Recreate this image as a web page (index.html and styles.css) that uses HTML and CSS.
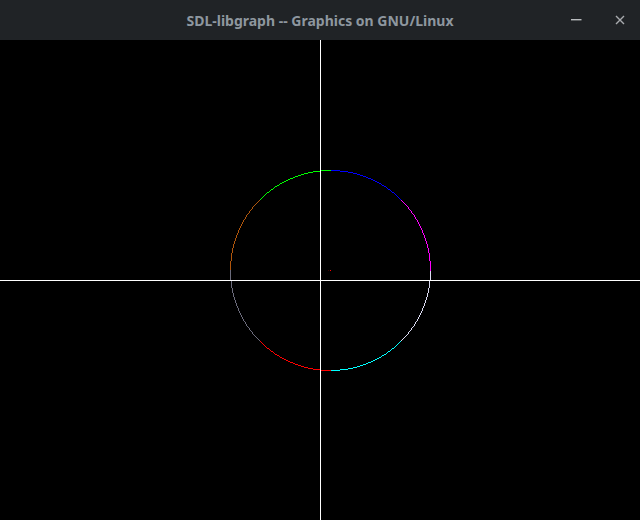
FILE: index.html
```html
<!DOCTYPE html>
<html>
<head>
<meta charset="utf-8">
<title>SDL-libgraph -- Graphics on GNU/Linux</title>
<link rel="stylesheet" href="styles.css">
</head>
<body>
<div class="window">
  <header class="titlebar">
    <div class="title">SDL-libgraph -- Graphics on GNU/Linux</div>
    <div class="controls">
      <svg class="btn" width="20" height="20" viewBox="0 0 20 20"><rect x="11" y="9" width="10.5" height="1.4" fill="#b9bcbf"/></svg>
      <svg class="btn" width="20" height="20" viewBox="0 0 20 20"><path d="M6 6 L14 14 M14 6 L6 14" stroke="#a8abae" stroke-width="1.4" fill="none"/></svg>
    </div>
  </header>
  <canvas id="screen" class="screen" width="640" height="480"></canvas>
</div>
<script src="script.js"></script>
</body>
</html>
```
FILE: styles.css
```css
html, body {
  margin: 0;
  padding: 0;
  background: #000;
}
.window {
  width: 640px;
  height: 520px;
  display: flex;
  flex-direction: column;
}
.titlebar {
  height: 40px;
  background: #202326;
  position: relative;
  display: flex;
  align-items: center;
  justify-content: center;
}
.title {
  font-family: "Noto Sans", "Open Sans", sans-serif;
  font-weight: bold;
  font-size: 14px;
  color: #8e979f;
  letter-spacing: 0;
}
.controls {
  position: absolute;
  right: 10px;
  top: 10px;
  display: flex;
  gap: 30px;
}
.btn {
  display: block;
  overflow: visible;
}
.screen {
  display: block;
  width: 640px;
  height: 480px;
  background: #000;
}
```
FILE: script.js
```js
(function () {
  var c = document.getElementById('screen');
  var g = c.getContext('2d');
  g.fillStyle = '#000';
  g.fillRect(0, 0, 640, 480);
  function px(x, y, col) { g.fillStyle = col; g.fillRect(x, y, 1, 1); }
  var cx = 330, cy = 230, r = 100;
  var x = 0, y = r, d = 1 - r;
  while (x <= y) {
    px(cx + x, cy - y, '#0000ff');
    px(cx - x, cy - y, '#00ff00');
    px(cx + y, cy + x, '#dcdcf2');
    px(cx + y, cy - x, '#ff00ff');
    px(cx + x, cy + y, '#00ffff');
    px(cx - x, cy + y, '#ff0000');
    px(cx - y, cy - x, '#b0560c');
    px(cx - y, cy + x, '#6c6c7c');
    x++;
    if (d < 0) { d += 2 * x + 1; } else { y--; d += 2 * (x - y) + 1; }
  }
  g.fillStyle = '#ffffff';
  g.fillRect(320, 0, 1, 480);
  g.fillRect(0, 240, 640, 1);
  px(330, 230, '#ff0000');
  px(328, 230, '#3a0000');
})();
```
